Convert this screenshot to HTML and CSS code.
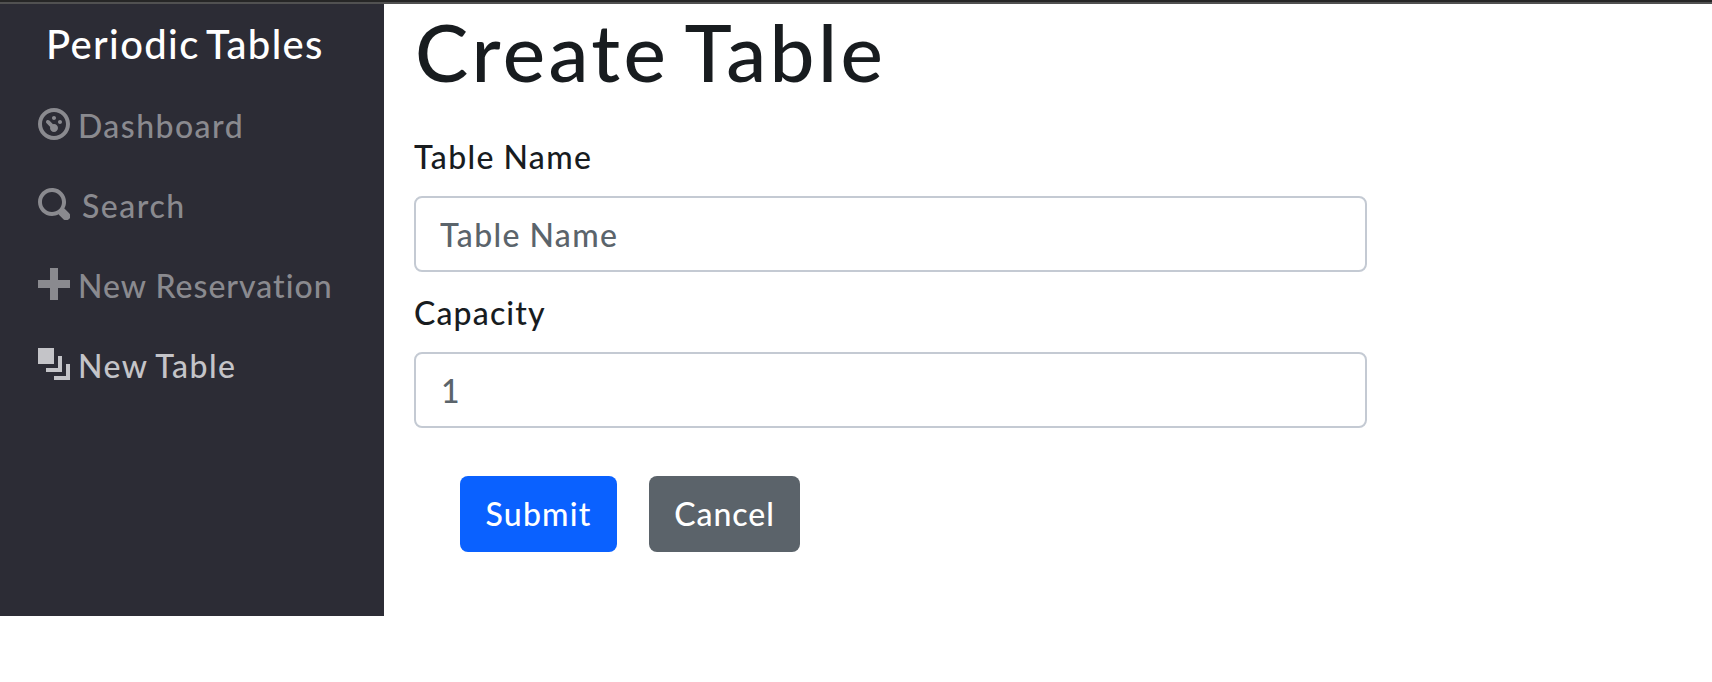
FILE: index.html
```html
<!DOCTYPE html>
<html lang="en">
<head>
<meta charset="utf-8">
<title>Periodic Tables</title>
<link rel="stylesheet" href="styles.css">
</head>
<body>
<div class="topline"></div>
<div class="layout">
  <nav class="sidebar">
    <a class="brand">Periodic Tables</a>
    <ul class="menu">
      <li class="item"><svg class="icon" viewBox="0 0 8 8"><path d="M4 0c-2.2 0-4 1.8-4 4s1.8 4 4 4 4-1.8 4-4-1.8-4-4-4zm0 1c1.66 0 3 1.34 3 3s-1.34 3-3 3-3-1.34-3-3 1.34-3 3-3zm0 1c-.28 0-.5.22-.5.5s.22.5.5.5.5-.22.5-.5-.22-.5-.5-.5zm-1.66 1a.5.5 0 0 0-.19.84l.91.91c-.02.08-.06.16-.06.25 0 .55.45 1 1 1s1-.45 1-1-.45-1-1-1c-.09 0-.17.04-.25.06l-.91-.91a.5.5 0 0 0-.44-.16.5.5 0 0 0-.06 0zm3.16 0c-.28 0-.5.22-.5.5s.22.5.5.5.5-.22.5-.5-.22-.5-.5-.5z"/></svg><span class="t-dashboard">Dashboard</span></li>
      <li class="item"><svg class="icon" viewBox="0 0 8 8"><path d="M3.5 0c-1.93 0-3.5 1.57-3.5 3.5s1.57 3.5 3.5 3.5c.59 0 1.17-.14 1.66-.41a1 1 0 0 0 .13.13l1 1a1.02 1.02 0 1 0 1.44-1.44l-1-1a1 1 0 0 0-.16-.13c.27-.49.44-1.06.44-1.66 0-1.93-1.55-3.5-3.5-3.5zm0 1c1.39 0 2.5 1.11 2.5 2.5 0 .66-.24 1.27-.66 1.72-.01.01-.02.02-.03.03a1 1 0 0 0-.13.13c-.44.4-1.04.63-1.69.63-1.39 0-2.5-1.11-2.5-2.5s1.11-2.5 2.5-2.5z"/></svg><span class="t-search">Search</span></li>
      <li class="item"><svg class="icon" viewBox="0 0 8 8"><path d="M3 0v3h-3v2h3v3h2v-3h3v-2h-3v-3h-2z"/></svg><span class="t-reservation">New Reservation</span></li>
      <li class="item active"><svg class="icon" viewBox="0 0 8 8"><path d="M0 0v4h4v-4h-4zm5 2v3h-3v1h4v-4h-1zm2 2v3h-3v1h4v-4h-1z"/></svg><span class="t-table">New Table</span></li>
    </ul>
  </nav>
  <main class="content">
    <h1 class="title">Create Table</h1>
    <form class="form">
      <label class="label t-name" for="name">Table Name</label>
      <input class="input t-name" id="name" type="text" placeholder="Table Name">
      <label class="label t-capacity" for="capacity">Capacity</label>
      <input class="input t-number" id="capacity" type="text" placeholder="1">
      <div class="actions">
        <button class="btn submit" type="button">Submit</button>
        <button class="btn cancel" type="button">Cancel</button>
      </div>
    </form>
  </main>
</div>
</body>
</html>
```
FILE: styles.css
```css
* { box-sizing: border-box; }
body {
  margin: 0;
  background: #fff;
  color: #181c1f;
  font: 500 32px/48px Lato, "Open Sans", sans-serif;
  white-space: nowrap;
}
.topline { height: 4px; background: #262626; border-bottom: 2px solid #515151; }
.layout { display: flex; }
.sidebar { width: 384px; height: 612px; background: #2c2c35; }
.brand { display: block; padding: 10px 0 0 46px; color: #fff; font-size: 40px; line-height: 60px; letter-spacing: 1.35px; word-spacing: -4px; }
.menu { list-style: none; margin: 10px 0 0; padding: 0 0 0 38px; }
.item { display: flex; height: 80px; padding-top: 18px; color: #8a8a8f; }
.active { color: #c4c4c8; }
.icon { width: 32px; height: 32px; margin: 6px 8px 0 0; fill: currentColor; }
.t-dashboard { letter-spacing: 1.45px; }
.t-search { margin-left: 4px; letter-spacing: 1.5px; }
.t-reservation { letter-spacing: 1px; }
.t-table { letter-spacing: 1.45px; word-spacing: -1px; }
.content { padding-left: 30px; }
.title { margin: -1px 0 0; padding-left: 1px; font-size: 80px; line-height: 96px; font-weight: 500; letter-spacing: 3.4px; word-spacing: -6px; }
.form { width: 953px; margin-top: 34px; display: flex; flex-direction: column; }
.label { height: 48px; }
.input {
  height: 76px;
  margin: 15px 0 17px;
  padding: 0 24px;
  border: 2px solid #c4cad3;
  border-radius: 8px;
  background: #fff;
  font: inherit;
}
.t-name { letter-spacing: 1.4px; word-spacing: -1px; }
.t-capacity { letter-spacing: 1.15px; }
.t-number { padding-left: 25px; }
.input::placeholder { color: #5b646b; opacity: 1; }
.actions { display: flex; gap: 32px; padding: 31px 0 0 46px; }
.btn { height: 76px; padding: 0; border: 0; border-radius: 8px; color: #fff; font: inherit; }
.submit { width: 157px; background: #0a61ff; letter-spacing: 1.2px; }
.cancel { width: 151px; background: #5b636a; letter-spacing: 0.95px; }
```
